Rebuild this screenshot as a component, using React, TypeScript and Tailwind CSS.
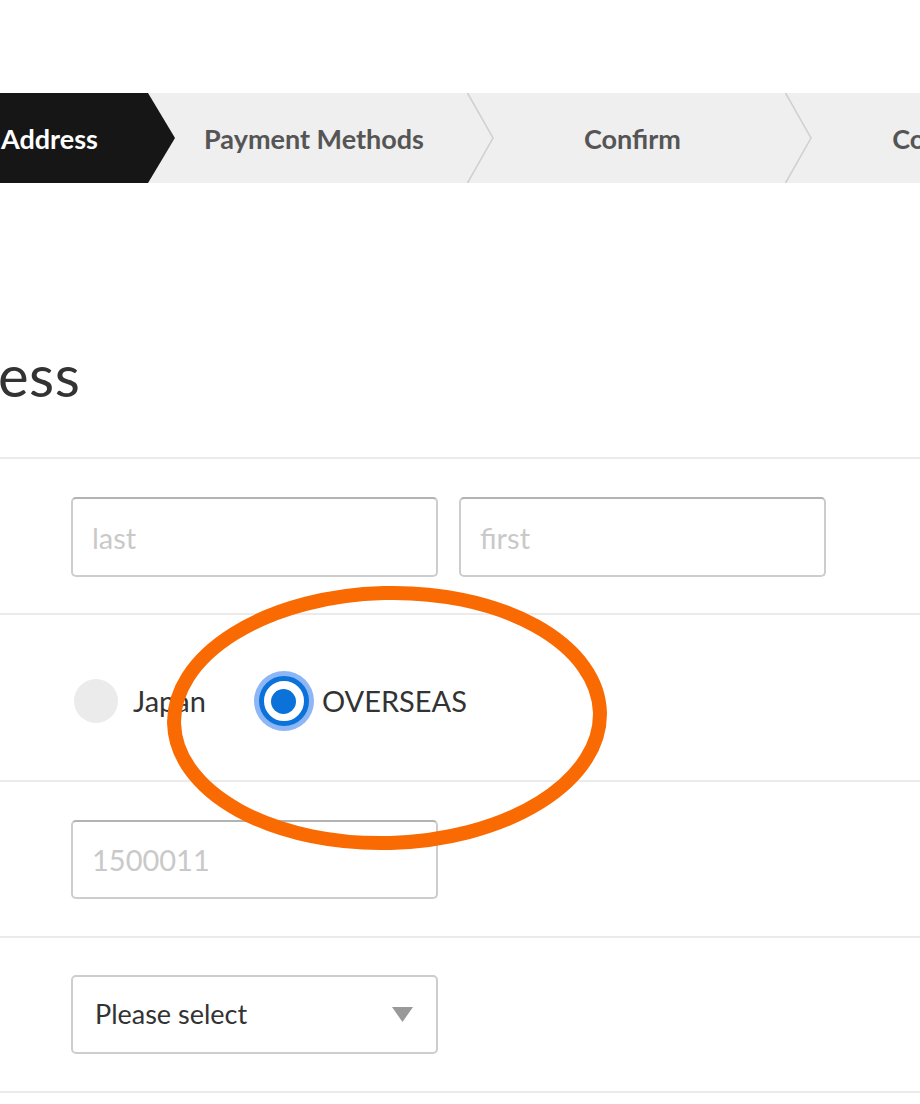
import React from "react";

function Chevron() {
  return (
    <svg width="27" height="90" viewBox="0 0 27 90" className="shrink-0 block">
      <polyline points="0.5,0 26,45 0.5,90" fill="none" stroke="#cfcfcf" strokeWidth="1.5" />
    </svg>
  );
}

const inputCls =
  "w-[367px] rounded-[5px] border-2 border-[#cdcdcd] border-t-[#b3b3b3] bg-white px-[19px] text-[29px] text-[#333] placeholder:text-[#c9c9c9] outline-none";

export default function App() {
  return (
    <div className="relative w-[920px] h-[1104px] overflow-hidden bg-white font-['Lato',sans-serif] text-[#333]">
      <div className="pt-[93px]">
        <div className="flex h-[90px] bg-[#efefef] whitespace-nowrap">
          <div className="w-[175px] shrink-0 flex items-center bg-[#161616] pl-[1px] pt-[3px] text-white font-bold text-[27px] [clip-path:polygon(0_0,148px_0,175px_50%,148px_100%,0_100%)]">
            Address
          </div>
          <div className="w-[292px] shrink-0 flex items-center justify-center pr-[14px] pt-[3px] text-[#555] font-bold text-[27px]">
            Payment Methods
          </div>
          <Chevron />
          <div className="w-[291px] shrink-0 flex items-center justify-center pr-[14px] pt-[3px] text-[#555] font-bold text-[27px]">
            Confirm
          </div>
          <Chevron />
          <div className="w-[291px] shrink-0 flex items-center justify-center pr-[14px] pt-[3px] text-[#555] font-bold text-[27px]">
            Complete
          </div>
        </div>
      </div>

      <div className="h-[274px] pt-[162px]">
        <h1 className="ml-[-2px] text-[58px] leading-[60px] tracking-[0.5px] text-[#333] font-normal">ess</h1>
      </div>

      <div className="border-t-2 border-[#ebebeb] pl-[71px] pt-[38px] pb-[36px] flex gap-[21px]">
        <input placeholder="last" className={inputCls + " h-[80px]"} />
        <input placeholder="first" className={inputCls + " h-[80px]"} />
      </div>

      <div className="border-t-2 border-[#ebebeb] h-[167px] pt-[7px] flex items-center pl-[74px]">
        <div className="w-[44px] h-[44px] rounded-full bg-[#ebebeb]" />
        <span className="ml-[15px] text-[29px] text-[#333]">Japan</span>
        <div className="ml-[53px] w-[50px] h-[50px] rounded-full border-[5px] border-[#0b72d9] ring-[5px] ring-[#8cb6f6] bg-white flex items-center justify-center">
          <div className="w-[25px] h-[25px] rounded-full bg-[#0b72d9]" />
        </div>
        <span className="ml-[13px] text-[29px] text-[#333]">OVERSEAS</span>
      </div>

      <div className="border-t-2 border-[#ebebeb] pl-[71px] pt-[38px] pb-[37px] flex">
        <input placeholder="1500011" className={inputCls + " h-[79px]"} />
      </div>

      <div className="border-t-2 border-[#ebebeb] pl-[71px] pt-[37px] pb-[37px] flex">
        <div className="w-[367px] h-[79px] rounded-[5px] border-2 border-[#cdcdcd] bg-white flex items-center justify-between pl-[22px] pr-[23px]">
          <span className="text-[27px] text-[#333]">Please select</span>
          <svg width="21" height="15" viewBox="0 0 21 15">
            <polygon points="0,0 21,0 10.5,15" fill="#999" />
          </svg>
        </div>
      </div>
      <div className="border-t-2 border-[#ebebeb]" />

      <svg width="920" height="1104" className="absolute left-0 top-0 pointer-events-none">
        <ellipse cx="387" cy="718" rx="213" ry="125" transform="rotate(-1.5 387 718)" fill="none" stroke="#fa6a02" strokeWidth="14" />
      </svg>
    </div>
  );
}
